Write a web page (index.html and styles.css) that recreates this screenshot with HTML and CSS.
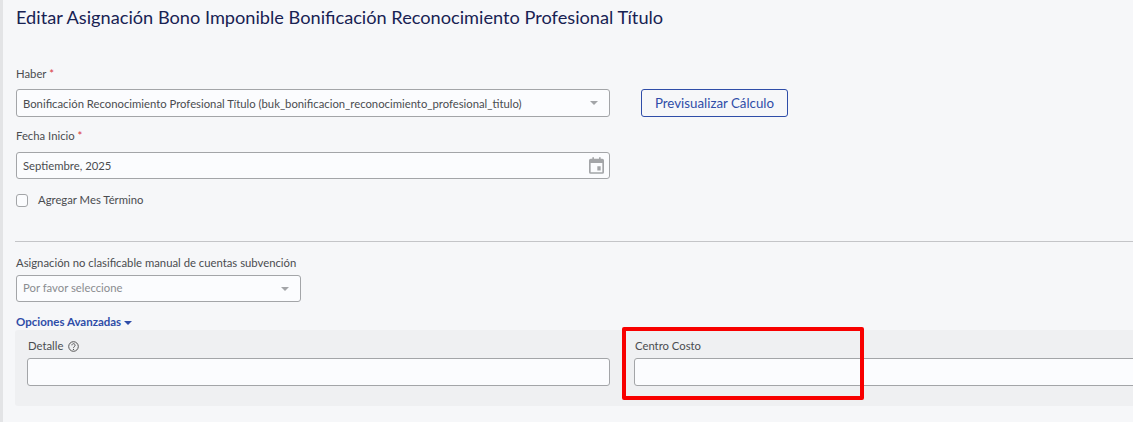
FILE: index.html
```html
<!DOCTYPE html>
<html>
<head>
    <title>Editar Asignación</title>
    <meta charset="UTF-8">
    <link rel="stylesheet" href="styles.css">
</head>
<body>
  <div class="page">
    <h1>Editar Asignación Bono Imponible Bonificación Reconocimiento Profesional Título</h1>

    <div class="row-haber">
      <div class="field-wide">
        <label class="field-label">Haber <span class="req">*</span></label>
        <div class="control">
          <span>Bonificación Reconocimiento Profesional Título (buk_bonificacion_reconocimiento_profesional_titulo)</span>
          <span class="caret"></span>
        </div>
      </div>
      <button class="preview-button">Previsualizar Cálculo</button>
    </div>

    <div class="field-wide field-fecha">
      <label class="field-label">Fecha Inicio <span class="req">*</span></label>
      <div class="control control-date">
        <span>Septiembre, 2025</span>
        <svg class="cal-icon" width="15" height="17" viewBox="0 0 18 20"><path fill="#a3a5a8" d="M4 0h2v2h6V0h2v2h2a2 2 0 0 1 2 2v14a2 2 0 0 1-2 2H2a2 2 0 0 1-2-2V4a2 2 0 0 1 2-2h2V0zM2 7v11h14V7H2zm8 4h4v5h-4v-5z"/></svg>
      </div>
    </div>

    <label class="check-row">
      <span class="check-box"></span>
      <span class="check-text">Agregar Mes Término</span>
    </label>

    <hr class="divider">

    <div class="field-small">
      <label class="field-label">Asignación no clasificable manual de cuentas subvención</label>
      <div class="control control-placeholder">
        <span class="placeholder-text">Por favor seleccione</span>
        <span class="caret"></span>
      </div>
    </div>

    <a class="advanced-link">Opciones Avanzadas <span class="caret-blue"></span></a>

    <div class="advanced-panel">
      <div class="panel-field">
        <label class="field-label">Detalle
          <svg class="help-icon" width="11" height="11" viewBox="0 0 11 11"><circle cx="5.5" cy="5.5" r="4.8" fill="none" stroke="#555" stroke-width="1"/><path d="M3.9 4.3a1.6 1.6 0 1 1 2.5 1.3c-.6.4-.9.7-.9 1.3" fill="none" stroke="#555" stroke-width="1"/><circle cx="5.5" cy="8.4" r=".6" fill="#555"/></svg>
        </label>
        <div class="control"></div>
      </div>
      <div class="panel-field panel-field-right">
        <label class="field-label">Centro Costo</label>
        <div class="control"></div>
      </div>
    </div>
  </div>

  <div class="highlight"></div>
</body>
</html>
```

FILE: styles.css
```css
/* Basic Reset */
* {
    box-sizing: border-box;
    margin: 0;
    padding: 0;
    font-family: 'Lato', 'Open Sans', sans-serif;
}

html, body {
    height: 100%;
    overflow: hidden;
    background-color: #f6f7f9;
    color: #4a4c50;
}

.page {
    position: relative;
    width: 1133px;
    height: 422px;
    padding: 0 0 0 12px;
    border-left: 3px solid #e3e4e6;
    overflow: hidden;
}

h1 {
    margin: 7px 0 0 1px;
    font-size: 18.2px;
    line-height: 20px;
    font-weight: 400;
    color: #182253;
    white-space: nowrap;
}

.field-label {
    display: block;
    font-size: 11.3px;
    line-height: 14px;
    color: #4a4c50;
}

.req {
    color: #d9363e;
}

/* Inputs */
.control {
    display: flex;
    align-items: center;
    justify-content: space-between;
    height: 28px;
    margin-top: 8px;
    padding: 0 11px 0 6px;
    background: #fbfcfe;
    border: 1px solid #a3a5a8;
    border-radius: 3px;
    font-size: 11.3px;
    color: #4a4c50;
    white-space: nowrap;
}

.caret {
    width: 0;
    height: 0;
    border-left: 4px solid transparent;
    border-right: 4px solid transparent;
    border-top: 4px solid #a3a5a8;
}

.row-haber {
    display: flex;
    align-items: flex-end;
    gap: 31px;
    margin-top: 40px;
    margin-left: 1px;
}

.field-wide {
    width: 594px;
}

.preview-button {
    width: 147px;
    height: 28px;
    background: transparent;
    border: 1px solid #2f4da8;
    border-radius: 3px;
    color: #2f4da8;
    font-size: 13.3px;
}

.field-fecha {
    margin-top: 12px;
    margin-left: 1px;
}

.control-date {
    height: 27px;
    margin-top: 9px;
    padding-right: 5px;
}

.check-row {
    display: flex;
    align-items: center;
    gap: 10px;
    margin-top: 15px;
    margin-left: 1px;
    font-size: 11.3px;
    line-height: 13px;
}

.check-box {
    width: 12px;
    height: 13px;
    background: #fbfcfe;
    border: 1px solid #a3a5a8;
    border-radius: 3px;
}

.check-text {
    margin-top: -2px;
}

.divider {
    height: 1px;
    margin-top: 34px;
    border: 0;
    background: #c4c5c8;
}

.field-small {
    width: 285px;
    margin-top: 14px;
    margin-left: 1px;
}

.field-small .field-label {
    white-space: nowrap;
}

.field-small .control {
    height: 27px;
    margin-top: 5px;
}

.control-placeholder {
    color: #8a8c90;
}

.placeholder-text {
    margin-top: -3px;
}

.advanced-link {
    display: block;
    margin-top: 13px;
    margin-left: 1px;
    font-size: 11.5px;
    line-height: 14px;
    font-weight: 700;
    color: #2f4da8;
}

.caret-blue {
    display: inline-block;
    width: 0;
    height: 0;
    vertical-align: middle;
    border-left: 4px solid transparent;
    border-right: 4px solid transparent;
    border-top: 4px solid #2f4da8;
}

.advanced-panel {
    display: flex;
    gap: 24px;
    height: 76px;
    margin-top: 1px;
    padding: 9px 0 0 12px;
    background: #eff0f2;
    border-radius: 3px 0 0 3px;
}

.panel-field {
    width: 583px;
    flex: none;
}

.panel-field .field-label {
    margin-left: 1px;
}

.panel-field .control {
    margin-top: 5px;
}

.panel-field-right {
    width: 600px;
}

.help-icon {
    vertical-align: -2px;
    margin-left: 2px;
}

/* Red annotation box */
.highlight {
    position: absolute;
    left: 622px;
    top: 327px;
    width: 242px;
    height: 73px;
    border: 4px solid #f80000;
    border-radius: 2px;
}
```
